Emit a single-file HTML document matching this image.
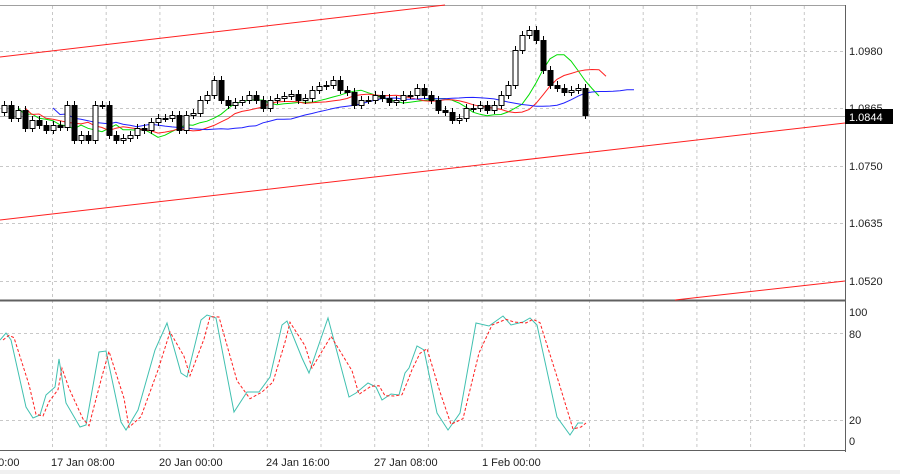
<!DOCTYPE html>
<html><head><meta charset="utf-8"><style>
html,body{margin:0;padding:0;background:#fff;width:900px;height:474px;overflow:hidden}
svg{display:block;font-family:"Liberation Sans",sans-serif}
</style></head><body>
<svg id="s" width="900" height="474" viewBox="0 0 900 474">
<rect x="0" y="470" width="900" height="4" fill="#f0f0f0"/>
<g id="grid" stroke="#c8c8c8" stroke-dasharray="3,3" stroke-width="1"></g>
<line x1="0" y1="5.5" x2="846" y2="5.5" stroke="#a0a0a0"/>
<line x1="845.5" y1="5" x2="845.5" y2="452" stroke="#606060"/>
<line x1="0" y1="300.5" x2="846" y2="300.5" stroke="#606060" stroke-width="2"/>
<line x1="0" y1="450.5" x2="846" y2="450.5" stroke="#606060"/>
<line x1="0" y1="116.5" x2="845" y2="116.5" stroke="#b0b0b0"/>
<g stroke="#ff2020" stroke-width="1">
<line x1="0" y1="57" x2="445" y2="5"/>
<line x1="0" y1="220" x2="845" y2="123"/>
<line x1="675" y1="300" x2="845" y2="281"/>
</g>
<g id="ma"></g>
<g id="cd"></g>
<g id="st"></g>
<g font-size="11" fill="#222">
<text x="849" y="55">1.0980</text>
<text x="849" y="112">1.0865</text>
<text x="849" y="170">1.0750</text>
<text x="849" y="227">1.0635</text>
<text x="849" y="285">1.0520</text>
<text x="849" y="316">100</text>
<text x="849" y="338">80</text>
<text x="849" y="424">20</text>
<text x="849" y="445">0</text>
<text x="-8" y="466">00:00</text>
<text x="51" y="466">17 Jan 08:00</text>
<text x="159" y="466">20 Jan 00:00</text>
<text x="266" y="466">24 Jan 16:00</text>
<text x="374" y="466">27 Jan 08:00</text>
<text x="482" y="466">1 Feb 00:00</text>
</g>
<rect x="845" y="109" width="48" height="15" fill="#000"/>
<text x="849" y="121" font-size="11" fill="#fff">1.0844</text>
</svg>
<script>
var NS="http://www.w3.org/2000/svg";
function el(p,t,a){var e=document.createElementNS(NS,t);for(var k in a)e.setAttribute(k,a[k]);document.getElementById(p).appendChild(e);return e;}
for(var i=0;i<15;i++){var x=52.5+i*53.7;el("grid","line",{x1:x,y1:6,x2:x,y2:450});}
[51,108,166,223,281].forEach(function(y){el("grid","line",{x1:0,y1:y+.5,x2:845,y2:y+.5});});
[333,420].forEach(function(y){el("grid","line",{x1:0,y1:y+.5,x2:845,y2:y+.5});});
var c=[105,118,110,128,120,125,130,125,127,105,140,135,140,105,105,135,140,138,135,128,130,122,118,118,115,130,115,113,100,95,80,100,105,102,100,95,100,108,100,98,96,94,100,98,90,86,85,80,90,92,105,100,100,95,98,102,100,95,95,88,95,100,110,112,120,118,108,108,105,110,105,95,85,50,35,30,40,70,85,88,92,90,88,115];
var prev=112;
c.forEach(function(v,i){var x=4+i*7;var o=prev;var t=Math.min(o,v),b=Math.max(o,v);
el("cd","line",{x1:x+.5,y1:t-4,x2:x+.5,y2:b+4,stroke:"#000"});
el("cd","rect",{x:x-2,y:t+.5,width:5,height:Math.max(1,b-t),fill:v>o?"#000":"#fff",stroke:"#000"});prev=v;});
function ma(n,sh,col){var pts=[];for(var i=0;i<c.length;i++){var s=0,k=0;for(var j=Math.max(0,i-n+1);j<=i;j++){s+=c[j];k++;}pts.push((4+(i+sh)*7)+","+(s/k+3).toFixed(1));}
el("ma","polyline",{points:pts.join(" "),fill:"none",stroke:col,"stroke-width":1});}
ma(6,2,"#00dd00");ma(10,3,"#ff2020");ma(20,7,"#2020ff");
var st=[[0,340],[6,333],[11,340],[26,407],[33,418],[40,415],[46,395],[55,387],[59,359],[66,403],[80,427],[86,425],[99,352],[106,351],[121,422],[126,430],[138,410],[155,350],[167,323],[181,373],[187,377],[201,320],[207,315],[216,318],[234,412],[247,392],[259,392],[270,377],[282,325],[287,321],[302,358],[309,373],[328,318],[349,397],[356,393],[368,383],[376,387],[382,400],[391,394],[399,395],[405,373],[409,368],[417,346],[424,350],[437,413],[448,430],[460,413],[476,323],[489,326],[503,316],[511,325],[523,322],[530,318],[537,325],[557,417],[570,435],[578,423],[583,423]];
el("st","polyline",{points:st.map(function(p){return p[0]+","+p[1];}).join(" "),fill:"none",stroke:"#40c0b0","stroke-width":1});
var sm=[];for(var i=0;i<st.length;i++){var a=st[Math.max(0,i-1)][1],b=st[i][1];sm.push((st[i][0]+3)+","+((a+2*b)/3).toFixed(1));}
el("st","polyline",{points:sm.join(" "),fill:"none",stroke:"#ff2020","stroke-width":1,"stroke-dasharray":"3,2"});
</script>
</body></html>
